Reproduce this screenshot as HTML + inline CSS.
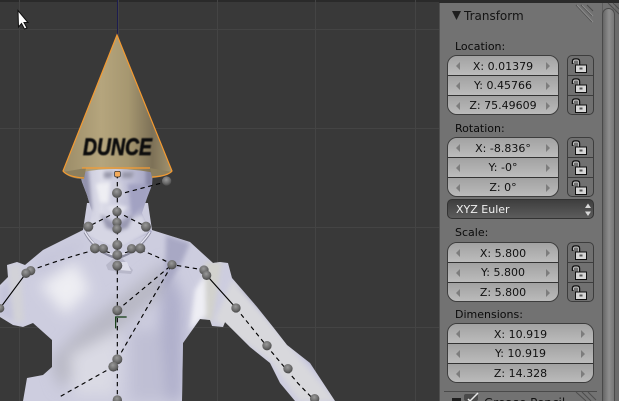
<!DOCTYPE html>
<html><head><meta charset="utf-8"><style>
html,body{margin:0;padding:0;background:#393939;overflow:hidden}
#r{position:relative;width:619px;height:401px;overflow:hidden;font-family:"DejaVu Sans","Liberation Sans",sans-serif;font-size:11px;color:#0a0a0a}
.v{position:absolute;left:0;top:0}
.p{position:absolute;left:439px;top:3px;width:180px;height:398px;background:#727272;border-left:1px solid #4f4f4f;box-sizing:border-box}
.a{position:absolute;white-space:nowrap}
.g{position:absolute;border:1px solid #3d3d3d;border-radius:10px;overflow:hidden;box-sizing:border-box}
.f{height:20px;box-sizing:border-box;position:relative;background:linear-gradient(#a2a2a2,#bcbcbc);border-top:1px solid #333;text-align:center;line-height:20px;color:#111}
.f:first-child{border-top:0;line-height:21px;height:19px}
.f:before{content:"";position:absolute;left:8px;top:6px;border:4px solid transparent;border-left:0;border-right:4px solid #7d7d7d}
.f:after{content:"";position:absolute;right:8px;top:6px;border:4px solid transparent;border-right:0;border-left:4px solid #7d7d7d}
.w{position:absolute;left:447px;width:112px;height:60px}
.d{left:447px;width:147px}
.l{position:absolute;left:567px;width:27px;height:60px;border:1px solid #3d3d3d;border-radius:5px;background:repeating-linear-gradient(#707070 0 19px,#3d3d3d 19px 20px);box-sizing:border-box;overflow:hidden}
.l svg{position:absolute;left:3px;width:16px;height:16px}
</style></head><body><div id="r">
<svg class="v" width="440" height="401" viewBox="0 0 440 401">
<defs>
<linearGradient id="cn" x1="0" x2="1" y1="0" y2="0"><stop offset="0" stop-color="#9b8c68"/><stop offset=".35" stop-color="#b5a57d"/><stop offset=".6" stop-color="#a69770"/><stop offset=".82" stop-color="#7d7157"/><stop offset="1" stop-color="#a29470"/></linearGradient>
<radialGradient id="b" cx=".45" cy=".35" r=".7"><stop offset="0" stop-color="#9a9a9a"/><stop offset=".6" stop-color="#6a6a6a"/><stop offset="1" stop-color="#404040"/></radialGradient>
<linearGradient id="sk" x1="0" x2="1" y1="0" y2="0"><stop offset="0" stop-color="#b5b5ce"/><stop offset=".35" stop-color="#dcdce8"/><stop offset=".65" stop-color="#c0c0d6"/><stop offset="1" stop-color="#9797ba"/></linearGradient>
<filter id="bl" x="-30%" y="-30%" width="160%" height="160%"><feGaussianBlur stdDeviation="7"/></filter>
<filter id="bl2" x="-30%" y="-30%" width="160%" height="160%"><feGaussianBlur stdDeviation="2.5"/></filter>
<filter id="bl1" x="-30%" y="-30%" width="160%" height="160%"><feGaussianBlur stdDeviation="1.800"/></filter>
<filter id="bl3"><feGaussianBlur stdDeviation=".5"/></filter>
<clipPath id="bd"><path d="M87 203L83 230L67 238L43 250L25 265L17 262L7 265L8 277L0 285V317L13 325L23 327L33 323L52 340L52 367L43 375L27 378L23 401H182L183 343L200 319L210 320L212 326L223 327L225 322L250 347L270 363L280 383L295 401H335L310 363L287 345L273 327L257 307L232 278L228 263L220 262L213 263L190 242L171 236L152 230L148 203Z"/></clipPath>
<clipPath id="hd"><path d="M78 166H153L152 185L147 198L142 213L147 225L152 232L117 248L83 233L90 222L92 212L87 195L82 182Z"/></clipPath>
</defs>
<rect width="440" height="401" fill="#393939"/>
<rect y="0" width="440" height="2" fill="#2a2a2a"/>
<g fill="#444"><rect x="19" width="1" height="401"/><rect x="118" width="1" height="401"/><rect x="217" width="1" height="401"/><rect x="315" width="1" height="401"/><rect x="415" width="1" height="401"/><rect y="29" width="440" height="1"/><rect y="128" width="440" height="1"/><rect y="227" width="440" height="1"/><rect y="327" width="440" height="1"/></g>
<rect x="117" width="1" height="36" fill="#1c1c50"/>
<!-- body -->
<g clip-path="url(#bd)">
<rect width="340" height="401" fill="#cdcddf"/>
<g filter="url(#bl)">
<path d="M40 285L75 262L90 290L65 315Z" fill="#eeeef3"/>
<path d="M50 360L85 325L165 262L172 285L100 345L60 390Z" fill="#b8b8c4"/>
<path d="M130 330H170V401H130Z" fill="#bfbfd4"/>
<path d="M70 355L120 330L115 395L75 395Z" fill="#dadae4"/>
<path d="M165 260L183 300L182 401H168L160 320Z" fill="#aeaeca"/>
<path d="M30 258L90 235L70 265L40 280Z" fill="#c6c6da"/>
</g>
<g filter="url(#bl2)">
<path d="M215 320L232 280L292 350L335 401H300L270 360Z" fill="#d8d8dc"/>
<path d="M237 285L290 340L335 390L345 375L290 320Z" fill="#a2a2c4"/>
<path d="M205 262L222 262L212 322L204 318Z" fill="#d2d2ce"/>
<path d="M8 266L21 264L24 322L14 322Z" fill="#d2d2d8"/>
<path d="M166 235L190 243L182 262L165 290Z" fill="#a8a8c4"/>
<path d="M0 290L8 280L14 320L0 315Z" fill="#c4c4da"/>
<path d="M195 290L205 275L206 315L190 330Z" fill="#eeeef4"/>
</g>
</g>
<!-- neck/head -->
<g clip-path="url(#hd)">
<rect x="70" y="160" width="90" height="90" fill="url(#sk)"/>
<g filter="url(#bl1)">
<path d="M93 215L117 226L143 214L150 232L117 250L84 232Z" fill="#d6d6e4"/>
<path d="M100 214L117 224L134 214L128 228L117 232L106 228Z" fill="#9a9ab2"/>
<path d="M104 172L114 172L111 178H104ZM122 172H134L132 178H122Z" fill="#9696a8"/>
<path d="M96 184L110 182L108 203L100 202Z" fill="#eeeef3"/>
<path d="M114 182H121L123 196L112 196Z" fill="#d2d2de"/>
<path d="M128 184H150L145 205L132 216Z" fill="#a2a2c2"/>
<path d="M78 166H88L92 210H85Z" fill="#9292ac"/>
<path d="M146 166H153V186H146Z" fill="#8787a6"/>
<path d="M106 207L117 205L128 207L122 213H112Z" fill="#e4e4ee"/>
</g>
</g>
<path d="M85 232Q96 252 117 258Q138 252 150 232" fill="none" stroke="#8a8a9e" stroke-width="3"/>
<path d="M85 232Q96 251 117 256Q138 251 150 232" fill="none" stroke="#e4e4f0" stroke-width="1.500"/>
<path d="M106 265L114 258H122L133 270L131 274L118 273L114 271L108 270Z" fill="#b8b8ca"/>
<path d="M118 262L127 262L131 271L120 270Z" fill="#dedeea"/>
<!-- cone -->
<path d="M117 35L172 171Q165 178 150 172Q115 166 82 172Q68 177 63 171Z" fill="url(#cn)"/>
<path d="M63 172Q70 179 84 179L86 168Z M172 172Q166 177 152 178L150 168Z" fill="#8c7f5e"/>
<path d="M82 168H150" stroke="#f79c32" stroke-width="1.200"/>
<path d="M84 178Q68 177 63 171L117 35L172 171Q168 176 152 177" fill="none" stroke="#f59a30" stroke-width="1.200"/>
<text x="83" y="155" font-family="Liberation Sans,sans-serif" font-weight="bold" font-style="italic" font-size="24" fill="#111" stroke="#111" stroke-width=".7" textLength="69" lengthAdjust="spacingAndGlyphs" filter="url(#bl3)">DUNCE</text>
<!-- bones -->
<g transform="translate(0,170) scale(.3333)">
<g fill="none" stroke="#000" stroke-width="3.4" stroke-dasharray="13 11">
<path d="M352 12V693"/>
<path d="M375 68L500 35"/>
<path d="M351 125L265 170M351 125L438 170"/>
<path d="M90 302Q200 262 285 240M421 240Q480 262 516 284L612 300"/>
<path d="M352 421L516 284M352 568L516 284M340 590L180 680"/>
<path d="M708 414L800 528L894 640L1008 758"/>
<path d="M352 255L285 235M352 255L421 235"/>
</g>
<path d="M78 310L0 415M620 316L708 414" stroke="#000" stroke-width="3.4" fill="none"/>
<path d="M347 475V441H380" fill="none" stroke="#0f3a10" stroke-width="3.5"/>
<g fill="url(#b)">
<circle cx="500" cy="33" r="14"/><circle cx="351" cy="69" r="15"/><circle cx="351" cy="125" r="14"/><circle cx="351" cy="157" r="14"/><circle cx="351" cy="177" r="14"/><circle cx="265" cy="170" r="15"/><circle cx="438" cy="170" r="15"/><circle cx="285" cy="235" r="15"/><circle cx="310" cy="236" r="14"/><circle cx="352" cy="225" r="15"/><circle cx="395" cy="236" r="14"/><circle cx="421" cy="235" r="15"/><circle cx="352" cy="255" r="15"/><circle cx="352" cy="287" r="15"/><circle cx="92" cy="302" r="14"/><circle cx="78" cy="310" r="14"/><circle cx="612" cy="300" r="14"/><circle cx="620" cy="316" r="14"/><circle cx="516" cy="284" r="14"/><circle cx="352" cy="421" r="15"/><circle cx="352" cy="568" r="15"/><circle cx="340" cy="590" r="15"/><circle cx="352" cy="690" r="14"/><circle cx="708" cy="414" r="14"/><circle cx="0" cy="415" r="13"/><circle cx="801" cy="527" r="14"/><circle cx="864" cy="596" r="14"/><circle cx="944" cy="686" r="14"/>
</g>
<rect x="344" y="4" width="17" height="17" rx="4" fill="#f5ac5c" stroke="#222" stroke-width="2"/>
</g>
<!-- cursor -->
<path d="M18 10.500L28 22.500H24L27 28L24.500 29L21.500 23.500L18.500 27Z" fill="#fff" stroke="#111" stroke-width="1"/>
</svg>

<div style="position:absolute;left:439px;top:0;width:180px;height:3px;background:#2a2a2a"></div>
<div class="p"></div>
<div style="position:absolute;left:602px;top:3px;width:1px;height:398px;background:#5e5e5e"></div>
<div style="position:absolute;left:602px;top:8px;width:13px;height:393px;border-radius:7px 7px 0 0;background:linear-gradient(90deg,#666,#8e8e8e 55%,#777);border:1px solid #4a4a4a;border-bottom:0;box-sizing:border-box"></div>
<div style="position:absolute;left:615px;top:3px;width:4px;height:398px;background:#6b6b6b"></div>

<div class="a" style="left:464px;top:9px;font-size:12px;line-height:14px;color:#141414">Transform</div>
<div class="a" style="left:455px;top:40px;line-height:13px">Location:</div>
<div class="a" style="left:455px;top:122px;line-height:13px">Rotation:</div>
<div class="a" style="left:455px;top:226px;line-height:13px">Scale:</div>
<div class="a" style="left:455px;top:308px;line-height:13px">Dimensions:</div>
<div class="a" style="left:484px;top:396px;height:5px;overflow:hidden;font-size:12px;line-height:14px;color:#141414">Grease Pencil</div>

<div class="g w" style="top:55px"><div class="f">X: 0.01379</div><div class="f">Y: 0.45766</div><div class="f">Z: 75.49609</div></div>
<div class="g w" style="top:137px"><div class="f">X: -8.836°</div><div class="f">Y: -0°</div><div class="f">Z: 0°</div></div>
<div class="g w" style="top:242px"><div class="f">X: 5.800</div><div class="f">Y: 5.800</div><div class="f">Z: 5.800</div></div>
<div class="g d" style="top:323px;height:60px"><div class="f">X: 10.919</div><div class="f">Y: 10.919</div><div class="f">Z: 14.328</div></div>

<div class="a" style="left:447px;top:199px;width:147px;height:20px;box-sizing:border-box;border:1px solid #333;border-radius:5px;background:linear-gradient(#3e3e3e,#5c5c5c);color:#f0f0f0;line-height:19px;padding-left:8px">XYZ Euler</div>

<div class="l" style="top:55px"><svg viewBox="0 0 16 16" style="top:2px"><use href="#lk"/></svg><svg viewBox="0 0 16 16" style="top:22px"><use href="#lk"/></svg><svg viewBox="0 0 16 16" style="top:42px"><use href="#lk"/></svg></div>
<div class="l" style="top:137px"><svg viewBox="0 0 16 16" style="top:2px"><use href="#lk"/></svg><svg viewBox="0 0 16 16" style="top:22px"><use href="#lk"/></svg><svg viewBox="0 0 16 16" style="top:42px"><use href="#lk"/></svg></div>
<div class="l" style="top:242px"><svg viewBox="0 0 16 16" style="top:2px"><use href="#lk"/></svg><svg viewBox="0 0 16 16" style="top:22px"><use href="#lk"/></svg><svg viewBox="0 0 16 16" style="top:42px"><use href="#lk"/></svg></div>

<svg class="v" width="619" height="401" viewBox="0 0 619 401" style="pointer-events:none">
<g stroke="#4d4d4d" fill="none"><path d="M576 5L592 22M581 5L592 16M587 5L593 11"/><path d="M608 3L619 14M613 3L619 9"/><path d="M576 392L586 401M582 392L591 401M588 392L596 400"/></g>
<g stroke="#8c8c8c" fill="none"><path d="M577 5L593 22M582 5L593 16"/></g>
<path d="M452 11H461L456.500 20Z" fill="#1e1e1e"/>
<path d="M452 398H461V401H452Z" fill="#1e1e1e"/>
<rect x="464" y="394" width="14" height="7" rx="2" fill="#4a4a4a"/>
<path d="M468 399L470 401M470 401L478 393" stroke="#e8e8e8" stroke-width="1.500" fill="none"/>
<rect x="444" y="391" width="153" height="1" fill="#4a4a4a"/>
<path d="M588 203.500L591 208H585Z M588 216L591 211.500H585Z" fill="#d8d8d8"/>
<defs><g id="lk"><path d="M1.500 6V3.500Q1.500 1 4 1H6Q8.500 1 8.500 3.500V7" fill="none" stroke="#111" stroke-width="1.500"/><path d="M2.500 5V3.500Q2.500 2 4 2H6Q7.500 2 7.500 3.500V7" fill="none" stroke="#e8e8e8" stroke-width=".7"/><rect x="4.500" y="7" width="11" height="7.500" fill="#d6d6d6" stroke="#111"/><rect x="8.500" y="9.500" width="3" height="2" fill="#555"/></g></defs>
</svg>
</div></body></html>
